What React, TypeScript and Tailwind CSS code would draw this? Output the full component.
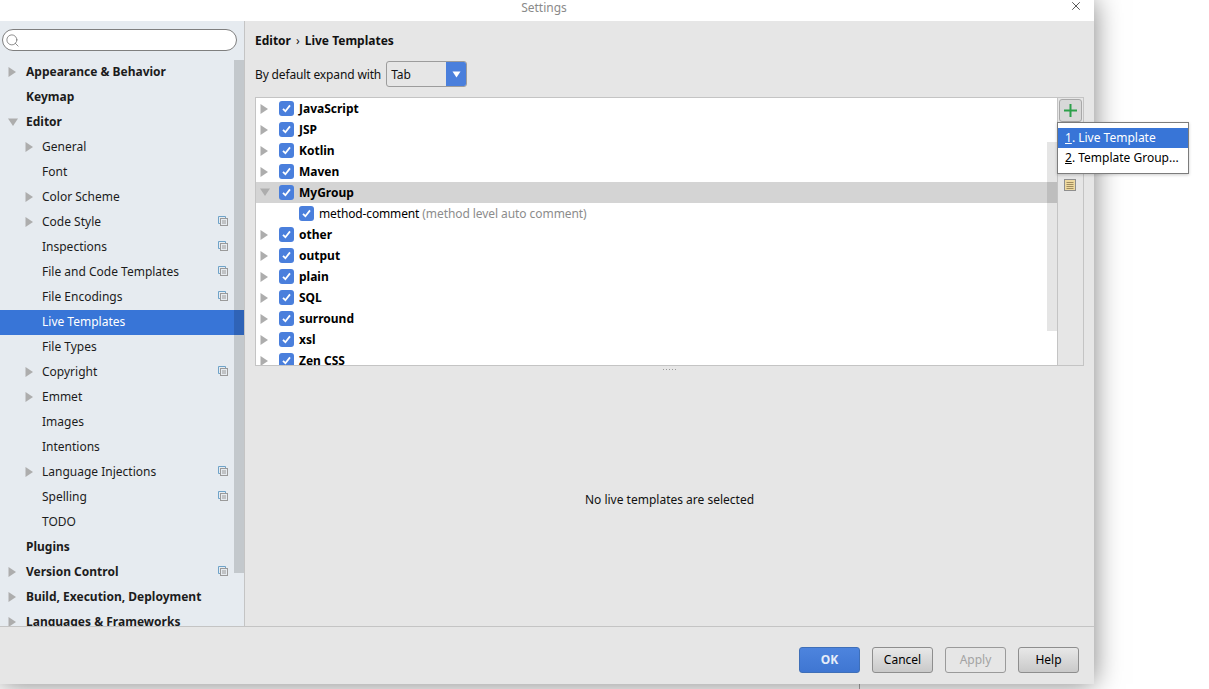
import { X, Search } from "lucide-react";

type NavItem = {
  label: string;
  level: 0 | 1;
  arrow?: "right" | "down";
  copy?: boolean;
  active?: boolean;
};

const navItems: NavItem[] = [
  { label: "Appearance & Behavior", level: 0, arrow: "right" },
  { label: "Keymap", level: 0 },
  { label: "Editor", level: 0, arrow: "down" },
  { label: "General", level: 1, arrow: "right" },
  { label: "Font", level: 1 },
  { label: "Color Scheme", level: 1, arrow: "right" },
  { label: "Code Style", level: 1, arrow: "right", copy: true },
  { label: "Inspections", level: 1, copy: true },
  { label: "File and Code Templates", level: 1, copy: true },
  { label: "File Encodings", level: 1, copy: true },
  { label: "Live Templates", level: 1, active: true },
  { label: "File Types", level: 1 },
  { label: "Copyright", level: 1, arrow: "right", copy: true },
  { label: "Emmet", level: 1, arrow: "right" },
  { label: "Images", level: 1 },
  { label: "Intentions", level: 1 },
  { label: "Language Injections", level: 1, arrow: "right", copy: true },
  { label: "Spelling", level: 1, copy: true },
  { label: "TODO", level: 1 },
  { label: "Plugins", level: 0 },
  { label: "Version Control", level: 0, arrow: "right", copy: true },
  { label: "Build, Execution, Deployment", level: 0, arrow: "right" },
  { label: "Languages & Frameworks", level: 0, arrow: "right" },
];

const groupsBefore = ["JavaScript", "JSP", "Kotlin", "Maven"];
const groupsAfter = ["other", "output", "plain", "SQL", "surround", "xsl", "Zen CSS"];

function Arrow({ dir }: { dir: "right" | "down" }) {
  return dir === "right" ? (
    <svg width="9" height="10" viewBox="0 0 9 10" className="shrink-0">
      <path d="M0.5 0 L8 5 L0.5 10 Z" fill="#adadad" />
    </svg>
  ) : (
    <svg width="10" height="9" viewBox="0 0 10 9" className="shrink-0">
      <path d="M0 0.5 L10 0.5 L5 8 Z" fill="#adadad" />
    </svg>
  );
}

function Check() {
  return (
    <span className="flex h-[15px] w-[15px] shrink-0 items-center justify-center rounded-[3px] bg-[#4a7fdc]">
      <svg width="11" height="11" viewBox="0 0 11 11">
        <path d="M2 5.8 L4.4 8.2 L9 2.4" fill="none" stroke="#fff" strokeWidth="1.8" />
      </svg>
    </span>
  );
}

function CopyIcon() {
  return (
    <svg width="10" height="10" viewBox="0 0 10 10" className="shrink-0">
      <path d="M0.5 7.5 V0.5 H7.5" fill="none" stroke="#6fa3c9" strokeWidth="1" />
      <path d="M0.5 7.5 H2.5 M7.5 0.5 V2.5" stroke="#6fa3c9" strokeWidth="1" />
      <rect x="2.5" y="2.5" width="7" height="7" fill="#e6ebf0" stroke="#9a9a9a" strokeWidth="1" />
      <path d="M4 5 H8 M4 7 H8" stroke="#9a9a9a" strokeWidth="1" />
    </svg>
  );
}

function NavRow({ item }: { item: NavItem }) {
  return (
    <div
      className={`relative flex h-[25px] shrink-0 items-center pb-[2px] ${item.active ? "bg-[#3875d7] text-white" : "text-[#1c1c1c]"}`}
    >
      {item.arrow && (
        <span
          className={`absolute ${item.arrow === "down" ? "top-[8px]" : "top-[7px]"} ${item.level === 0 ? "left-[8px]" : "left-[25px]"}`}
        >
          <Arrow dir={item.arrow} />
        </span>
      )}
      <span className={`${item.level === 0 ? "ml-[26px] font-bold" : "ml-[42px]"} whitespace-nowrap`}>
        {item.label}
      </span>
      {item.copy && (
        <span className="absolute left-[218px] top-[6px]">
          <CopyIcon />
        </span>
      )}
    </div>
  );
}

function GroupRow({ label, open, selected }: { label: string; open?: boolean; selected?: boolean }) {
  return (
    <div className={`flex h-[21px] shrink-0 items-center ${selected ? "bg-[#d4d4d4]" : ""}`}>
      <span className="ml-[4px] flex w-[19px]">
        <Arrow dir={open ? "down" : "right"} />
      </span>
      <Check />
      <span className="ml-[5px] whitespace-nowrap font-bold text-black">{label}</span>
    </div>
  );
}

function FooterButton({ label, kind }: { label: string; kind?: "primary" | "disabled" }) {
  const look =
    kind === "primary"
      ? "border-[#3f6fb8] bg-gradient-to-b from-[#4d84de] to-[#3f76d2] font-bold text-[#e6edf8]"
      : kind === "disabled"
        ? "border-[#9a9a9a] bg-[#e6e6e6] text-[#a3a3a3]"
        : "border-[#8e8e8e] bg-gradient-to-b from-[#e8e8e8] to-[#c9c9c9] text-black";
  return (
    <button className={`flex h-[26px] w-[61px] items-center justify-center rounded-[3px] border ${look}`}>
      {label}
    </button>
  );
}

export default function App() {
  return (
    <div className="relative h-[689px] w-[1209px] overflow-hidden bg-white font-['Noto_Sans',sans-serif] text-[12px] leading-none">
      {/* window behind the dialog, only a sliver shows at the bottom */}
      <div className="absolute bottom-0 left-[859px] h-[8px] w-px bg-[#a8a8a8]" />

      <div className="relative flex h-[684px] w-[1094px] flex-col bg-[#e6e6e6] shadow-[0_0_26px_rgba(0,0,0,0.5)]">
        <div className="relative flex h-[21px] shrink-0 items-center justify-center bg-white pb-[5px] pr-[6px] text-[#8a8a8a]">
          Settings
          <X className="absolute left-[1069px] top-[-1px]" size={14} color="#333" strokeWidth={1.4} />
        </div>

        <div className="flex min-h-0 flex-1">
          {/* sidebar */}
          <div className="relative flex w-[245px] shrink-0 flex-col overflow-hidden border-r border-[#c4c4c4] bg-[#e6ebf0]">
            <div className="relative ml-[2px] mt-[8px] h-[22px] w-[235px] shrink-0 rounded-full border border-[#7f7f7f] bg-white">
              <Search className="absolute left-[2px] top-[3px]" size={15} color="#6a6a6a" strokeWidth={1.2} />
            </div>
            <div className="mt-[9px] flex flex-col">
              {navItems.map((item) => (
                <NavRow key={item.label} item={item} />
              ))}
            </div>
            <div className="absolute left-[234px] top-[39px] h-[513px] w-[10px] bg-black/15" />
          </div>

          {/* content */}
          <div className="flex min-w-0 flex-1 flex-col px-[10px]">
            <div className="mt-[13px] flex h-[14px] items-center font-bold text-[#111]">
              Editor<span className="mx-[5px] font-normal">›</span>Live Templates
            </div>

            <div className="mt-[13px] flex h-[26px] items-center text-[#111]">
              <span className="pt-[2px] tracking-[-0.14px]">By default expand with</span>
              <div className="ml-[5px] flex h-[26px] w-[81px] overflow-hidden rounded-[3px] border border-[#9c9c9c]">
                <span className="flex flex-1 items-center pl-[4px] pt-[2px]">Tab</span>
                <span className="flex w-[20px] items-center justify-center bg-[#4a7fdc]">
                  <svg width="9" height="7" viewBox="0 0 9 7">
                    <path d="M0.5 0.5 H8.5 L4.5 6.5 Z" fill="#fff" />
                  </svg>
                </span>
              </div>
            </div>

            <div className="relative mt-[10px] flex h-[269px] shrink-0 border border-[#c4c4c4]">
              <div className="flex min-w-0 flex-1 flex-col overflow-hidden bg-white">
                {groupsBefore.map((g) => (
                  <GroupRow key={g} label={g} />
                ))}
                <GroupRow label="MyGroup" open selected />
                <div className="flex h-[21px] shrink-0 items-center pl-[43px]">
                  <Check />
                  <span className="ml-[5px] whitespace-nowrap tracking-[-0.14px] text-black">method-comment</span>
                  <span className="ml-[3px] whitespace-nowrap tracking-[-0.07px] text-[#8c8c8c]">
                    (method level auto comment)
                  </span>
                </div>
                {groupsAfter.map((g) => (
                  <GroupRow key={g} label={g} />
                ))}
              </div>

              <div className="flex w-[26px] shrink-0 flex-col items-center border-l border-[#c4c4c4] bg-[#e6e6e6]">
                <span className="mt-[1px] flex h-[23px] w-[23px] items-center justify-center rounded-[3px] border border-[#a8a8a8] bg-[#d8d8d8]">
                  <svg width="13" height="13" viewBox="0 0 13 13" className="mr-[1px]">
                    <path d="M6.5 0 V13 M0 6.5 H13" stroke="#2ca04a" strokeWidth="2" />
                  </svg>
                </span>
                <svg width="12" height="12" viewBox="0 0 12 12" className="mr-[2px] mt-[57px]">
                  <rect x="0.5" y="0.5" width="11" height="11" fill="#eed9a0" stroke="#8f8f8f" />
                  <path d="M2.5 3.5 H9.5 M2.5 5.5 H9.5 M2.5 7.5 H9.5 M2.5 9.5 H9.5" stroke="#a08c5f" strokeWidth="1" />
                </svg>
              </div>

              {/* tree scrollbar */}
              <div className="absolute left-[791px] top-[44px] h-[189px] w-[10px] bg-black/10" />
            </div>

            <div className="flex h-[7px] items-center justify-center">
              <span className="h-[3px] w-[15px] bg-[radial-gradient(#9a9a9a_0.7px,transparent_0.8px)] bg-[length:3px_3px]" />
            </div>

            <div className="flex flex-1 items-center justify-center text-[#111]">No live templates are selected</div>
          </div>
        </div>

        <div className="flex h-[58px] shrink-0 items-center justify-end gap-[12px] border-t border-[#c4c4c4] pr-[15px] pt-[8px]">
          <FooterButton label="OK" kind="primary" />
          <FooterButton label="Cancel" />
          <FooterButton label="Apply" kind="disabled" />
          <FooterButton label="Help" />
        </div>
      </div>

      {/* add menu */}
      <div className="absolute left-[1057px] top-[122px] w-[132px] border border-[#7c7c7c] bg-white py-[5px] shadow-[0_1px_3px_rgba(0,0,0,0.2)]">
        <div className="flex h-[20px] items-center whitespace-nowrap bg-[#3875d7] pl-[7px] text-white">
          <span className="underline">1</span>. Live Template
        </div>
        <div className="flex h-[20px] items-center whitespace-nowrap pl-[7px] text-black">
          <span className="underline">2</span>. Template Group...
        </div>
      </div>
    </div>
  );
}
